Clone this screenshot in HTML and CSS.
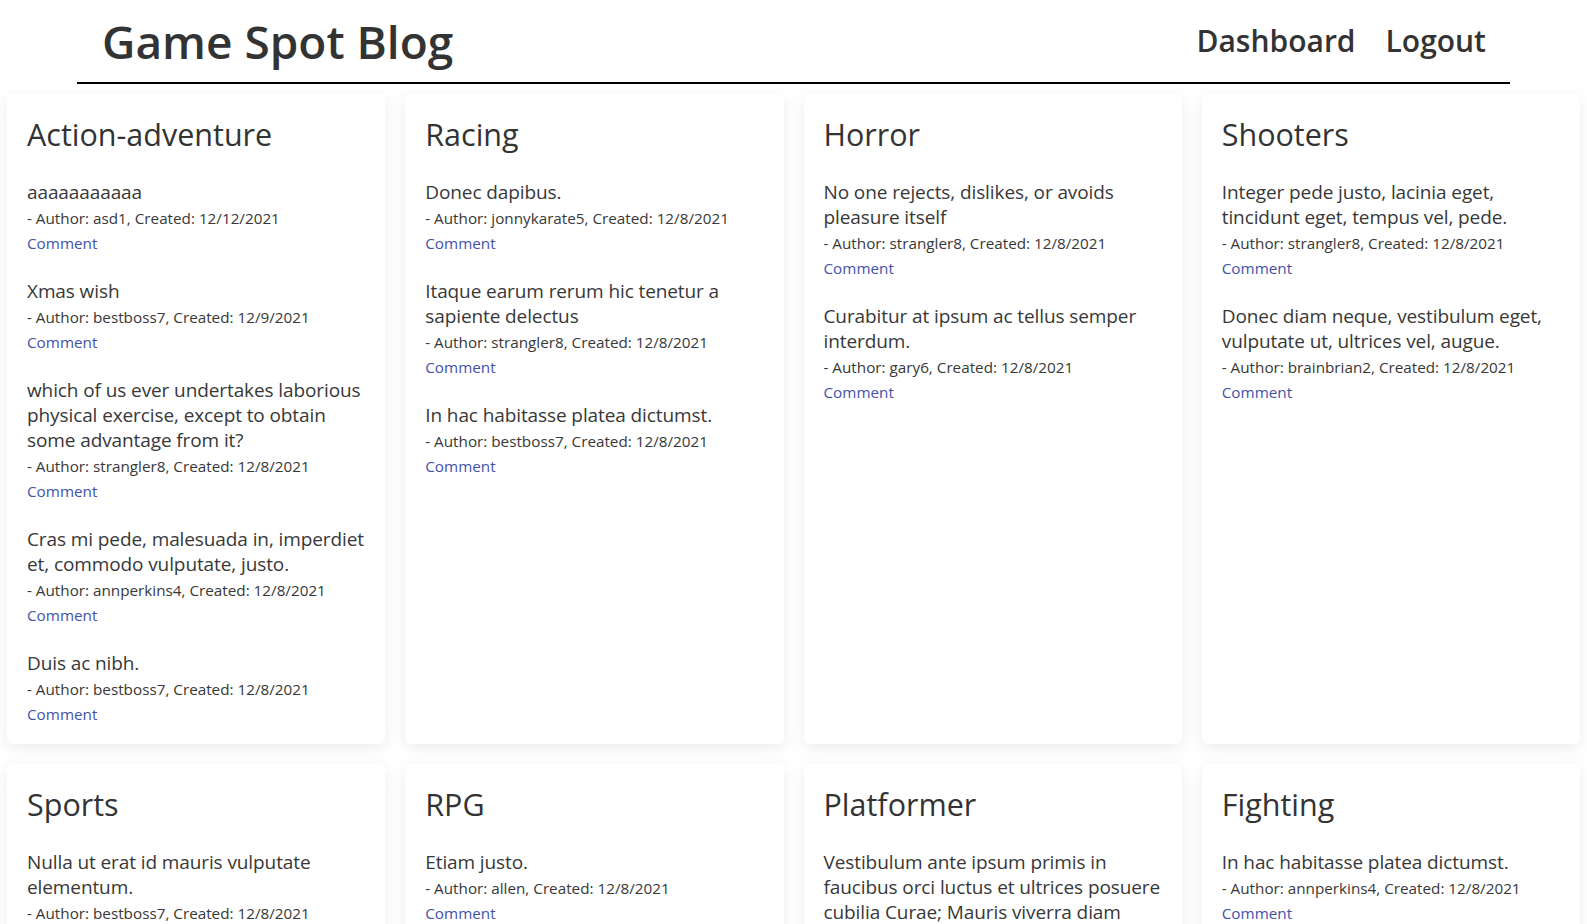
FILE: index.html
```html
<!DOCTYPE html>
<html lang="en">
<head>
<meta charset="utf-8">
<title>Game Spot Blog</title>
<link rel="stylesheet" href="styles.css">
</head>
<body>
<header class="site-header">
  <h1 class="brand">Game Spot Blog</h1>
  <nav class="nav">
    <a href="#" class="nav-link">Dashboard</a>
    <a href="#" class="nav-link">Logout</a>
  </nav>
</header>
<main class="grid">
  <section class="card">
    <h2 class="card-title">Action-adventure</h2>
    <article class="post"><h5 class="post-title">aaaaaaaaaaa</h5><p class="meta">- Author: asd1, Created: 12/12/2021</p><a href="#" class="comment">Comment</a></article>
    <article class="post"><h5 class="post-title">Xmas wish</h5><p class="meta">- Author: bestboss7, Created: 12/9/2021</p><a href="#" class="comment">Comment</a></article>
    <article class="post"><h5 class="post-title">which of us ever undertakes laborious physical exercise, except to obtain some advantage from it?</h5><p class="meta">- Author: strangler8, Created: 12/8/2021</p><a href="#" class="comment">Comment</a></article>
    <article class="post"><h5 class="post-title">Cras mi pede, malesuada in, imperdiet et, commodo vulputate, justo.</h5><p class="meta">- Author: annperkins4, Created: 12/8/2021</p><a href="#" class="comment">Comment</a></article>
    <article class="post"><h5 class="post-title">Duis ac nibh.</h5><p class="meta">- Author: bestboss7, Created: 12/8/2021</p><a href="#" class="comment">Comment</a></article>
  </section>
  <section class="card">
    <h2 class="card-title">Racing</h2>
    <article class="post"><h5 class="post-title">Donec dapibus.</h5><p class="meta">- Author: jonnykarate5, Created: 12/8/2021</p><a href="#" class="comment">Comment</a></article>
    <article class="post"><h5 class="post-title">Itaque earum rerum hic tenetur a sapiente delectus</h5><p class="meta">- Author: strangler8, Created: 12/8/2021</p><a href="#" class="comment">Comment</a></article>
    <article class="post"><h5 class="post-title">In hac habitasse platea dictumst.</h5><p class="meta">- Author: bestboss7, Created: 12/8/2021</p><a href="#" class="comment">Comment</a></article>
  </section>
  <section class="card">
    <h2 class="card-title">Horror</h2>
    <article class="post"><h5 class="post-title">No one rejects, dislikes, or avoids pleasure itself</h5><p class="meta">- Author: strangler8, Created: 12/8/2021</p><a href="#" class="comment">Comment</a></article>
    <article class="post"><h5 class="post-title">Curabitur at ipsum ac tellus semper interdum.</h5><p class="meta">- Author: gary6, Created: 12/8/2021</p><a href="#" class="comment">Comment</a></article>
  </section>
  <section class="card">
    <h2 class="card-title">Shooters</h2>
    <article class="post"><h5 class="post-title">Integer pede justo, lacinia eget, tincidunt eget, tempus vel, pede.</h5><p class="meta">- Author: strangler8, Created: 12/8/2021</p><a href="#" class="comment">Comment</a></article>
    <article class="post"><h5 class="post-title">Donec diam neque, vestibulum eget, vulputate ut, ultrices vel, augue.</h5><p class="meta">- Author: brainbrian2, Created: 12/8/2021</p><a href="#" class="comment">Comment</a></article>
  </section>
  <section class="card">
    <h2 class="card-title">Sports</h2>
    <article class="post"><h5 class="post-title">Nulla ut erat id mauris vulputate elementum.</h5><p class="meta">- Author: bestboss7, Created: 12/8/2021</p><a href="#" class="comment">Comment</a></article>
  </section>
  <section class="card">
    <h2 class="card-title">RPG</h2>
    <article class="post"><h5 class="post-title">Etiam justo.</h5><p class="meta">- Author: allen, Created: 12/8/2021</p><a href="#" class="comment">Comment</a></article>
  </section>
  <section class="card">
    <h2 class="card-title">Platformer</h2>
    <article class="post"><h5 class="post-title">Vestibulum ante ipsum primis in faucibus orci luctus et ultrices posuere cubilia Curae; Mauris viverra diam vitae quam.</h5><p class="meta">- Author: gary6, Created: 12/8/2021</p><a href="#" class="comment">Comment</a></article>
  </section>
  <section class="card">
    <h2 class="card-title">Fighting</h2>
    <article class="post"><h5 class="post-title">In hac habitasse platea dictumst.</h5><p class="meta">- Author: annperkins4, Created: 12/8/2021</p><a href="#" class="comment">Comment</a></article>
  </section>
</main>
</body>
</html>
```

FILE: styles.css
```css
* { box-sizing: border-box; }

body {
  margin: 0;
  background: #fff;
  color: #383838;
  font-family: "Open Sans", "Noto Sans", sans-serif;
}

.site-header {
  margin: 0 77px;
  padding: 0 24px 0 25px;
  height: 84px;
  border-bottom: 2px solid #000;
  display: flex;
  justify-content: space-between;
  align-items: flex-start;
}

.brand {
  margin: 11px 0 0;
  font-size: 46px;
  line-height: 60px;
  font-weight: 600;
  color: #333;
}

.nav {
  display: flex;
  gap: 30px;
  margin-top: 19px;
}

.nav-link {
  font-size: 30px;
  line-height: 44px;
  font-weight: 600;
  color: #333;
  text-decoration: none;
}

.grid {
  display: grid;
  grid-template-columns: repeat(4, 1fr);
  column-gap: 20px;
  row-gap: 20px;
  padding: 10px 7px 20px;
}

.card {
  background: #fff;
  border-radius: 6px;
  box-shadow: 0 4px 16px rgba(0, 0, 0, 0.08);
  padding: 20px 20px 17px;
  display: flex;
  flex-direction: column;
  gap: 23px;
}

.card-title {
  margin: 1px 0 4px;
  font-size: 30.5px;
  line-height: 38px;
  font-weight: 400;
  color: #333;
}

.post {
  display: flex;
  flex-direction: column;
  align-items: flex-start;
}

.post-title {
  margin: 0;
  font-size: 19px;
  line-height: 25px;
  font-weight: 400;
  letter-spacing: -0.1px;
  color: #383838;
}

.meta {
  margin: 1px 0 0;
  font-size: 15.25px;
  line-height: 25px;
  color: #383838;
}

.comment {
  font-size: 15.25px;
  line-height: 25px;
  color: #4352a8;
  text-decoration: none;
}
```
